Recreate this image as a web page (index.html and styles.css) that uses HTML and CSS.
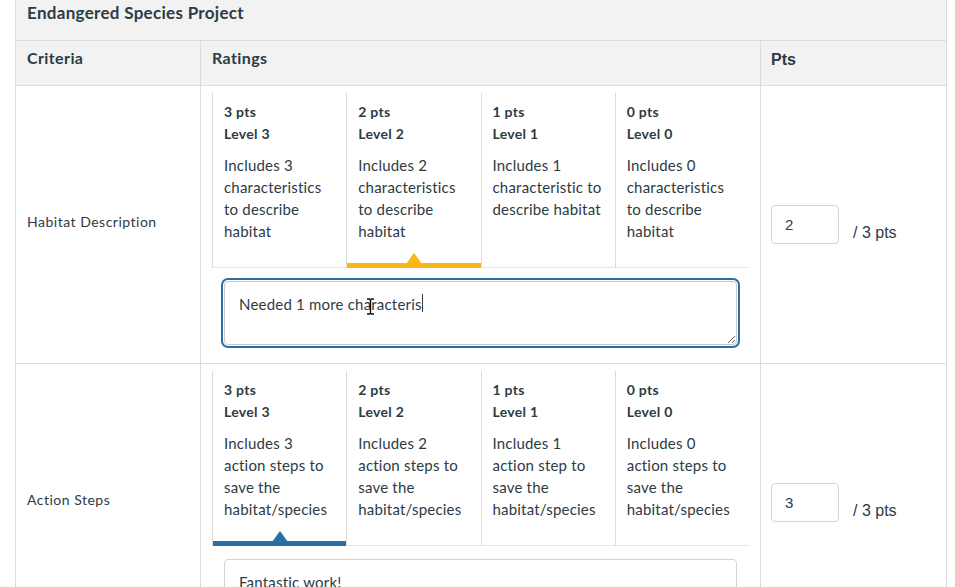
FILE: index.html
```html
<!DOCTYPE html>
<html lang="en">
<head>
    <meta charset="UTF-8">
    <meta name="viewport" content="width=device-width, initial-scale=1.0">
    <title>Endangered Species Project - Rubric</title>
    <link rel="stylesheet" href="styles.css">
</head>
<body>
    <div class="page">
        <table class="rubric">
            <colgroup>
                <col class="col-criteria">
                <col class="col-ratings">
                <col class="col-pts">
            </colgroup>
            <thead>
                <tr>
                    <th class="rubric-title" colspan="3">Endangered Species Project</th>
                </tr>
                <tr class="head-row">
                    <th>Criteria</th>
                    <th>Ratings</th>
                    <th class="pts-head">Pts</th>
                </tr>
            </thead>
            <tbody>
                <!-- Criterion 1 -->
                <tr>
                    <td class="criteria-cell">Habitat Description</td>
                    <td class="ratings-cell">
                        <div class="ratings">
                            <div class="rating">
                                <div class="rating-pts">3 pts</div>
                                <div class="rating-level">Level 3</div>
                                <div class="rating-desc">Includes 3 characteristics to describe habitat</div>
                            </div>
                            <div class="rating selected yellow">
                                <div class="rating-pts">2 pts</div>
                                <div class="rating-level">Level 2</div>
                                <div class="rating-desc">Includes 2 characteristics to describe habitat</div>
                            </div>
                            <div class="rating">
                                <div class="rating-pts">1 pts</div>
                                <div class="rating-level">Level 1</div>
                                <div class="rating-desc">Includes 1 characteristic to describe habitat</div>
                            </div>
                            <div class="rating">
                                <div class="rating-pts">0 pts</div>
                                <div class="rating-level">Level 0</div>
                                <div class="rating-desc">Includes 0 characteristics to describe habitat</div>
                            </div>
                        </div>
                        <div class="comment-wrap">
                            <textarea class="comment focused">Needed 1 more characteris</textarea>
                            <span class="caret"></span>
                            <svg class="ibeam" width="9" height="17" viewBox="0 0 9 17">
                                <path d="M1 1h2.5l1 1 1-1H8M4.5 2v13M1 16h2.5l1-1 1 1H8" fill="none" stroke="#111" stroke-width="1.4"/>
                            </svg>
                        </div>
                    </td>
                    <td class="pts-cell">
                        <div class="pts-entry">
                            <input class="pts-input" type="text" value="2">
                            <span class="pts-total">/ 3 pts</span>
                        </div>
                    </td>
                </tr>

                <!-- Criterion 2 -->
                <tr>
                    <td class="criteria-cell">Action Steps</td>
                    <td class="ratings-cell">
                        <div class="ratings">
                            <div class="rating selected blue">
                                <div class="rating-pts">3 pts</div>
                                <div class="rating-level">Level 3</div>
                                <div class="rating-desc">Includes 3 action steps to save the habitat/species</div>
                            </div>
                            <div class="rating">
                                <div class="rating-pts">2 pts</div>
                                <div class="rating-level">Level 2</div>
                                <div class="rating-desc">Includes 2 action steps to save the habitat/species</div>
                            </div>
                            <div class="rating">
                                <div class="rating-pts">1 pts</div>
                                <div class="rating-level">Level 1</div>
                                <div class="rating-desc">Includes 1 action step to save the habitat/species</div>
                            </div>
                            <div class="rating">
                                <div class="rating-pts">0 pts</div>
                                <div class="rating-level">Level 0</div>
                                <div class="rating-desc">Includes 0 action steps to save the habitat/species</div>
                            </div>
                        </div>
                        <div class="comment-wrap">
                            <textarea class="comment">Fantastic work!</textarea>
                        </div>
                    </td>
                    <td class="pts-cell">
                        <div class="pts-entry">
                            <input class="pts-input" type="text" value="3">
                            <span class="pts-total">/ 3 pts</span>
                        </div>
                    </td>
                </tr>
            </tbody>
        </table>
    </div>
</body>
</html>
```

FILE: styles.css
```css
/* Page */
body {
    margin: 0;
    background-color: #ffffff;
    color: #2d3b45;
    font-family: Lato, "Open Sans", sans-serif;
}

.page {
    padding-left: 15px;
}

/* Rubric table */
.rubric {
    width: 931px;
    border-collapse: collapse;
    table-layout: fixed;
}

.col-criteria {
    width: 185px;
}

.col-ratings {
    width: 560px;
}

.col-pts {
    width: 186px;
}

.rubric th,
.rubric td {
    border: 1px solid #dcdcdc;
    text-align: left;
}

.rubric-title {
    background-color: #f2f2f2;
    font-size: 17px;
    font-weight: bold;
    letter-spacing: 0.3px;
    line-height: 24px;
    padding: 1px 11px 15px;
    border-top: none !important;
}

.head-row th {
    background-color: #f2f2f2;
    font-size: 16px;
    font-weight: bold;
    letter-spacing: 0.4px;
    line-height: 22px;
    padding: 6px 11px 16px;
}

.head-row .pts-head {
    font-family: "Liberation Sans", Arial, sans-serif;
    letter-spacing: 0;
    padding: 8px 10px 14px;
}

/* Criterion rows */
.criteria-cell {
    font-size: 14px;
    letter-spacing: 0.5px;
    padding: 0 11px 6px;
    vertical-align: middle;
}

.ratings-cell {
    padding: 7px 11px 18px;
    vertical-align: top;
}

.ratings {
    display: flex;
    border-bottom: 1px solid #e4e4e4;
}

.rating {
    position: relative;
    flex: 1;
    padding: 8px 12px 25px 11px;
    border-left: 1px solid #dcdcdc;
    font-size: 15px;
    letter-spacing: 0.2px;
}

.rating-pts,
.rating-level {
    font-size: 14px;
    font-weight: bold;
    letter-spacing: 0.3px;
    line-height: 22px;
}

.rating-desc {
    margin-top: 9px;
    line-height: 22px;
}

/* Selected rating: bar with a small arrow above it */
.rating.selected::after {
    content: "";
    position: absolute;
    left: 0;
    right: 0;
    bottom: -1px;
    height: 5px;
}

.rating.selected::before {
    content: "";
    position: absolute;
    left: 50%;
    bottom: 3px;
    margin-left: -8px;
    border-left: 8px solid transparent;
    border-right: 8px solid transparent;
    border-bottom: 11px solid;
}

.rating.yellow::after {
    background-color: #fbb616;
}

.rating.yellow::before {
    border-bottom-color: #fbb616;
}

.rating.blue::after {
    background-color: #2a6fa1;
}

.rating.blue::before {
    border-bottom-color: #2a6fa1;
}

/* Comments */
.comment-wrap {
    position: relative;
    margin: 13px 12px 0 12px;
}

.comment {
    display: block;
    box-sizing: border-box;
    width: 100%;
    height: 64px;
    padding: 11px 14px;
    border: 1px solid #d4d4d4;
    border-radius: 4px;
    font-family: Lato, "Open Sans", sans-serif;
    font-size: 15px;
    letter-spacing: 0.2px;
    line-height: 22px;
    color: #2d3b45;
    background-color: #ffffff;
}

.comment.focused {
    border-color: #c9c9c9;
    box-shadow: 0 0 0 1px #ffffff, 0 0 0 3px #2a6fa1;
}

.caret {
    position: absolute;
    left: 198px;
    top: 13px;
    width: 1px;
    height: 18px;
    background-color: #2d3b45;
}

.ibeam {
    position: absolute;
    left: 142px;
    top: 17px;
}

/* Points */
.pts-cell {
    padding: 0 10px;
    vertical-align: middle;
    font-family: "Liberation Sans", Arial, sans-serif;
}

.pts-entry {
    display: flex;
    align-items: center;
    gap: 14px;
}

.pts-input {
    box-sizing: border-box;
    width: 68px;
    height: 39px;
    padding: 0 13px;
    border: 1px solid #d4d4d4;
    border-radius: 4px;
    font-family: "Liberation Sans", Arial, sans-serif;
    font-size: 15px;
    color: #2d3b45;
}

.pts-total {
    padding-top: 16px;
    font-size: 16px;
}
```
